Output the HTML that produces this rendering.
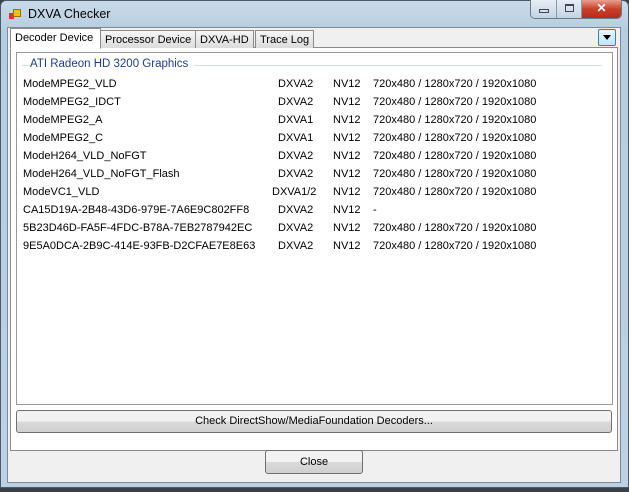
<!DOCTYPE html>
<html><head><meta charset="utf-8"><style>
*{margin:0;padding:0;box-sizing:border-box}
body{width:629px;height:492px;overflow:hidden;background:#3a4048;font-family:"Liberation Sans",sans-serif;font-size:11px;color:#000;position:relative}
.frame{position:absolute;left:0;top:0;width:629px;height:488px;background:linear-gradient(#c9dbe9,#b6cde0 30px,#bcd2e4);border:1px solid #4a5a6a;border-radius:6px 6px 0 0}
.client{position:absolute;left:7px;top:27px;width:614px;height:456px;background:#f0f0f0;border:1px solid #7d8a98}
.title{position:absolute;left:28px;top:7px;font-size:12.5px;color:#000}
.icon{position:absolute;left:9px;top:9px;width:12px;height:11px}
.icon i{position:absolute;display:block}
.btns{position:absolute;left:530px;top:0;width:92px;height:19px;border:1px solid #6a7a8a;border-top:none;border-radius:0 0 5px 5px;overflow:hidden;display:flex}
.btns div{height:18px;background:linear-gradient(#e6eef6,#c3d3e3);border-right:1px solid #8a9aaa}
.tab{position:absolute;top:30px;height:18px;border:1px solid #8a8a8a;border-bottom:none;background:linear-gradient(#f6f6f6,#dcdcdc);padding:3px 4px 0;font-size:11px}
.panel{position:absolute;left:10px;top:47px;width:608px;height:404px;background:#fff;border:1px solid #8a8a8a}
.list{position:absolute;left:16px;top:52px;width:597px;height:353px;background:#fff;border:1px solid #9a9a9a}
.grp{position:absolute;left:30px;top:58px;color:#1e3f8a;font-size:11.5px;background:#fff;padding-right:6px}
.gline{position:absolute;left:22px;top:65px;width:580px;border-top:1px solid #d5dfe5}
.row{position:absolute;left:0;height:16px;white-space:nowrap;font-size:11px}
.row span{position:absolute}
.b1{position:absolute;left:16px;top:410px;width:596px;height:23px;border:1px solid #707070;border-radius:3px;background:linear-gradient(#f2f2f2 50%,#dadada 50%,#d0d0d0);text-align:center;line-height:21px}
.b2{position:absolute;left:265px;top:450px;width:98px;height:24px;border:1px solid #707070;border-radius:3px;background:linear-gradient(#f2f2f2 50%,#dadada 50%,#d0d0d0);text-align:center;line-height:22px}
.dd{position:absolute;left:598px;top:29px;width:18px;height:17px;border:1px solid #3c7fb1;border-radius:2px;background:linear-gradient(#eaf6fd,#bee6fd)}
</style></head><body>
<div class="frame"></div>
<div class="icon"><i style="left:0;top:4px;width:5px;height:6px;background:#d33"></i><i style="left:4px;top:0;width:8px;height:8px;background:#f0c020;border:1px solid #a07010"></i></div>
<div class="title">DXVA Checker</div>
<div class="btns"><div style="width:26px"><i style="display:block;margin:9px 0 0 8px;width:10px;height:4px;border:1px solid #445"></i></div><div style="width:25px"><i style="display:block;margin:4px 0 0 8px;width:9px;height:8px;border:1px solid #445;border-top-width:2px"></i></div><div style="flex:1;background:linear-gradient(#e8a090,#c8402a 50%,#b82a18);border:none;color:#fff;font-weight:bold;text-align:center;font-size:12px;line-height:17px">✕</div></div>
<div class="client"></div>
<div class="panel"></div>
<div class="tab" style="left:100px">Processor Device</div>
<div class="tab" style="left:195px">DXVA-HD</div>
<div class="tab" style="left:255px">Trace Log</div>
<div class="tab" style="left:10px;top:28px;height:21px;width:91px;background:#fff;padding-top:3px;z-index:2;border-bottom:1px solid #fff">Decoder Device</div>
<div class="dd"><i style="position:absolute;left:4px;top:5px;border-left:4px solid transparent;border-right:4px solid transparent;border-top:5px solid #000"></i></div>
<div class="list"></div>
<div class="gline"></div>
<div class="grp">ATI Radeon HD 3200 Graphics</div>
<div id="rows"></div>
<div class="row" style="top:78px"><span style="left:23px">ModeMPEG2_VLD</span><span style="left:278px">DXVA2</span><span style="left:333px">NV12</span><span style="left:373px">720x480 / 1280x720 / 1920x1080</span></div>
<div class="row" style="top:96px"><span style="left:23px">ModeMPEG2_IDCT</span><span style="left:278px">DXVA2</span><span style="left:333px">NV12</span><span style="left:373px">720x480 / 1280x720 / 1920x1080</span></div>
<div class="row" style="top:114px"><span style="left:23px">ModeMPEG2_A</span><span style="left:278px">DXVA1</span><span style="left:333px">NV12</span><span style="left:373px">720x480 / 1280x720 / 1920x1080</span></div>
<div class="row" style="top:132px"><span style="left:23px">ModeMPEG2_C</span><span style="left:278px">DXVA1</span><span style="left:333px">NV12</span><span style="left:373px">720x480 / 1280x720 / 1920x1080</span></div>
<div class="row" style="top:150px"><span style="left:23px">ModeH264_VLD_NoFGT</span><span style="left:278px">DXVA2</span><span style="left:333px">NV12</span><span style="left:373px">720x480 / 1280x720 / 1920x1080</span></div>
<div class="row" style="top:168px"><span style="left:23px">ModeH264_VLD_NoFGT_Flash</span><span style="left:278px">DXVA2</span><span style="left:333px">NV12</span><span style="left:373px">720x480 / 1280x720 / 1920x1080</span></div>
<div class="row" style="top:186px"><span style="left:23px">ModeVC1_VLD</span><span style="left:272px">DXVA1/2</span><span style="left:333px">NV12</span><span style="left:373px">720x480 / 1280x720 / 1920x1080</span></div>
<div class="row" style="top:204px"><span style="left:23px">CA15D19A-2B48-43D6-979E-7A6E9C802FF8</span><span style="left:278px">DXVA2</span><span style="left:333px">NV12</span><span style="left:373px">-</span></div>
<div class="row" style="top:222px"><span style="left:23px">5B23D46D-FA5F-4FDC-B78A-7EB2787942EC</span><span style="left:278px">DXVA2</span><span style="left:333px">NV12</span><span style="left:373px">720x480 / 1280x720 / 1920x1080</span></div>
<div class="row" style="top:240px"><span style="left:23px">9E5A0DCA-2B9C-414E-93FB-D2CFAE7E8E63</span><span style="left:278px">DXVA2</span><span style="left:333px">NV12</span><span style="left:373px">720x480 / 1280x720 / 1920x1080</span></div>
<div class="b1">Check DirectShow/MediaFoundation Decoders...</div>
<div class="b2">Close</div>
</body></html>
